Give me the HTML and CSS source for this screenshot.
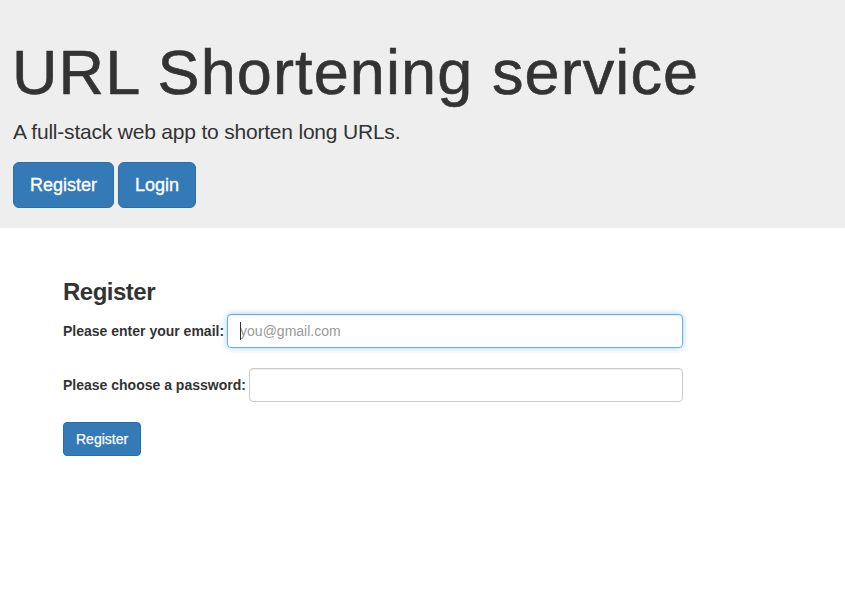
FILE: index.html
```html
<!DOCTYPE html>
<html lang="en">
<head>
<meta charset="utf-8">
<title>URL Shortening service</title>
<link rel="stylesheet" href="styles.css">
</head>
<body>
<header class="jumbotron">
  <h1 class="title">URL Shortening service</h1>
  <p class="lead">A full-stack web app to shorten long URLs.</p>
  <div class="actions">
    <a class="btn btn-lg" href="#">Register</a>
    <a class="btn btn-lg" href="#">Login</a>
  </div>
</header>
<main class="content">
  <h3 class="section-title">Register</h3>
  <form class="form">
    <div class="row">
      <label class="label" for="email">Please enter your email:</label>
      <div class="field focused">
        <input class="input" id="email" type="email" placeholder="you@gmail.com">
      </div>
    </div>
    <div class="row">
      <label class="label" for="password">Please choose a password:</label>
      <div class="field">
        <input class="input" id="password" type="password">
      </div>
    </div>
    <div class="row">
      <button class="btn btn-sm" type="button">Register</button>
    </div>
  </form>
</main>
</body>
</html>
```
FILE: styles.css
```css
* { box-sizing: border-box; }

body {
  margin: 0;
  font-family: "Liberation Sans", Arial, sans-serif;
  color: #333;
  background: #fff;
}

.jumbotron {
  background: #eeeeee;
  padding: 38px 13px 20px;
}

.title {
  margin: 0 0 10px -1px;
  font-size: 63px;
  line-height: 69px;
  font-weight: normal;
  letter-spacing: 1.1px;
  color: #333;
  -webkit-text-stroke: 0.6px #333;
}

.lead {
  margin: 0 0 15px;
  font-size: 21px;
  line-height: 30px;
  font-weight: 300;
  letter-spacing: -0.2px;
}

.actions {
  display: flex;
  gap: 4px;
}

.btn {
  display: inline-block;
  background: #337ab7;
  border: 1px solid #2e6da4;
  color: #fff;
  text-decoration: none;
  font-family: "Liberation Sans", Arial, sans-serif;
  cursor: pointer;
  -webkit-text-stroke: 0.35px #fff;
}

.btn-lg {
  padding: 10px 16px;
  font-size: 18px;
  line-height: 24px;
  border-radius: 6px;
}

.btn-sm {
  padding: 6px 12px;
  font-size: 14px;
  line-height: 20px;
  border-radius: 4px;
  -webkit-text-stroke: 0.25px #fff;
}

.content {
  padding: 51px 0 0 63px;
}

.section-title {
  margin: 0 0 9px;
  font-size: 24px;
  line-height: 26px;
  font-weight: bold;
  letter-spacing: -0.5px;
}

.form {
  width: 620px;
  display: flex;
  flex-direction: column;
  gap: 20px;
}

.row {
  display: flex;
  align-items: center;
  gap: 3px;
}

.label {
  font-size: 14px;
  font-weight: bold;
  white-space: nowrap;
}

.field {
  flex: 1;
  position: relative;
}

.input {
  display: block;
  width: 100%;
  height: 34px;
  padding: 6px 12px;
  font-size: 14px;
  line-height: 20px;
  font-family: "Liberation Sans", Arial, sans-serif;
  color: #555;
  background: #fff;
  border: 1px solid #ccc;
  border-radius: 4px;
  box-shadow: inset 0 1px 1px rgba(0, 0, 0, 0.075);
  outline: none;
}

.input::placeholder {
  color: #999;
}

.focused .input {
  border-color: #66afe9;
  box-shadow: inset 0 1px 1px rgba(0, 0, 0, 0.075), 0 0 6px rgba(102, 175, 233, 0.6);
}

.focused::before {
  content: "";
  position: absolute;
  left: 13px;
  top: 8px;
  width: 1px;
  height: 18px;
  background: #333;
  z-index: 1;
}
```
